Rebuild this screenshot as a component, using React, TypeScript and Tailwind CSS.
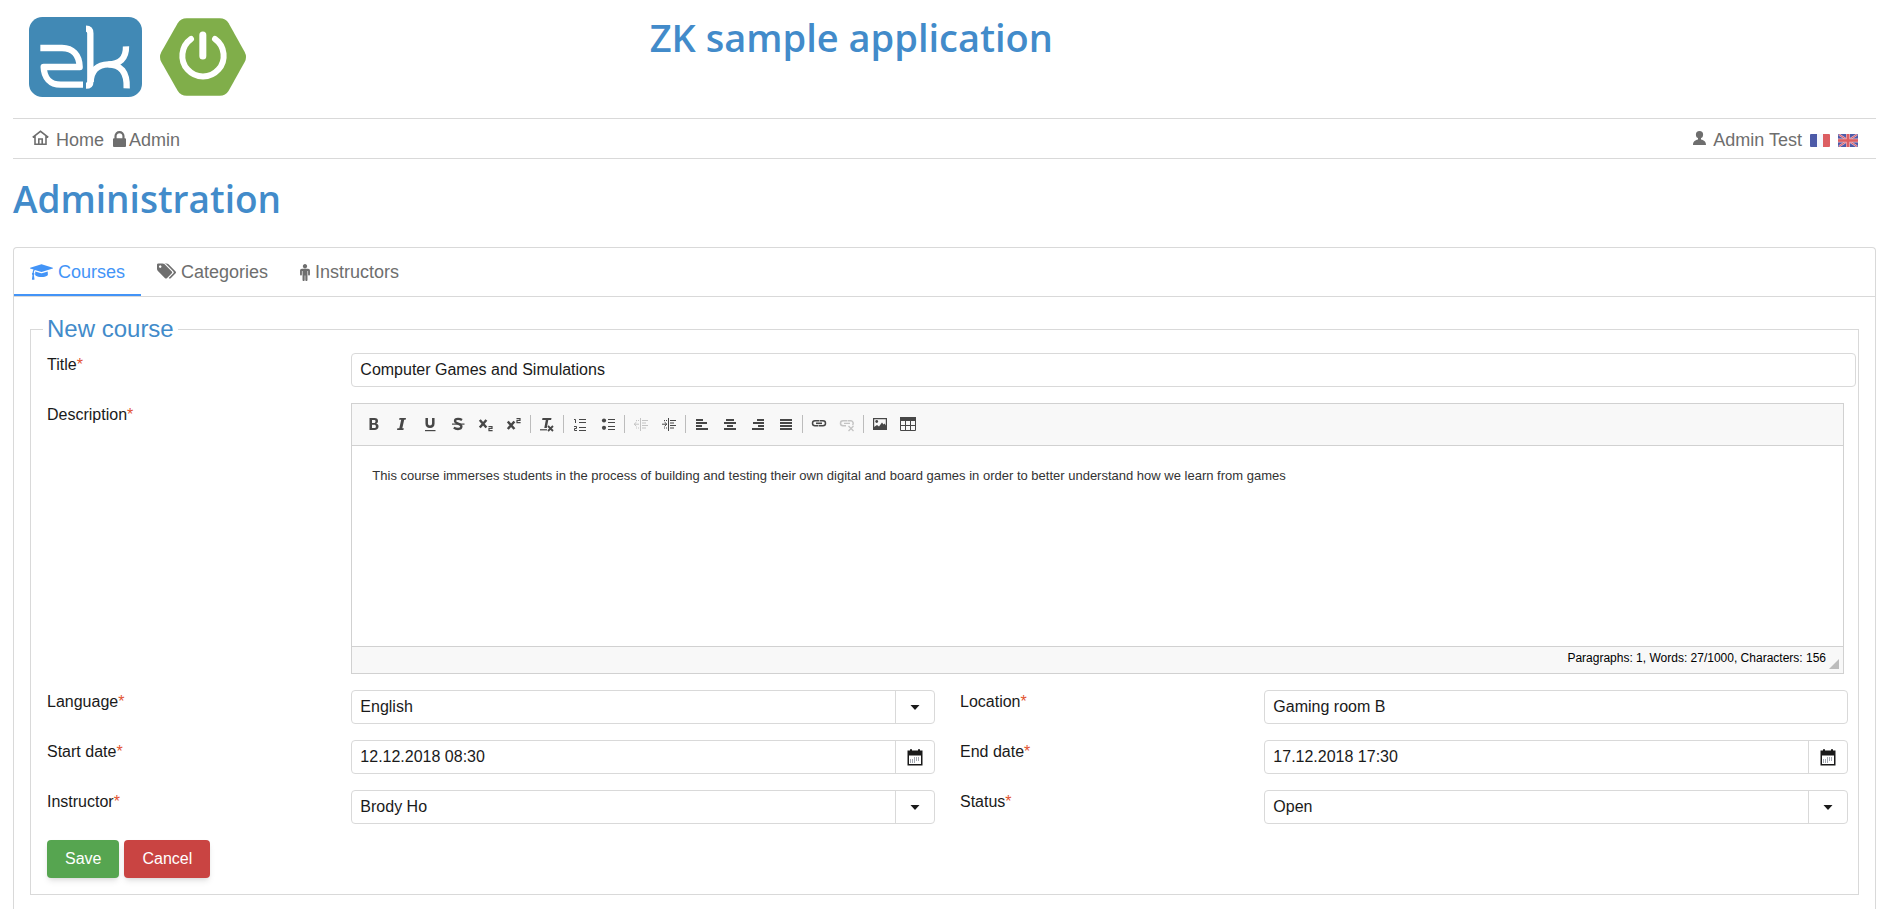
import React, { useId, useState } from "react";

function ZkLogo() {
  return (
    <svg viewBox="87 51 339 240" className="h-20 w-[113px]" aria-label="ZK">
      <rect x="87" y="51" width="339" height="240" rx="40" fill="#4189b5" />
      <g fill="none" stroke="#fff" strokeWidth="19" strokeLinejoin="round">
        <path d="M121 144H186C218 144 238 165 239 201H131C132 233 150 254 182 254H249" />
        <path d="M258 86Q271 86 271 100V245Q271 257 258 257" />
        <path d="M378 139C379 176 358 193 325 193C292 194 273 212 272 246" />
        <path d="M325 193C362 194 382 216 380 265" />
      </g>
    </svg>
  );
}

function SpringBootLogo() {
  return (
    <svg viewBox="480 54 258 234" className="h-[78px] w-[86px]" aria-label="Spring Boot">
      <path
        d="M560 55H659Q677 55 686 70L734 156Q742 171 734 186L686 272Q677 287 659 287H560Q542 287 533 272L484 186Q476 171 484 156L533 70Q542 55 560 55Z"
        fill="#80ae4a"
      />
      <g fill="none" stroke="#fff" strokeLinecap="round">
        <path d="M573 117A62 62 0 1 0 645 117" strokeWidth="18" />
        <path d="M608.500 105V168" strokeWidth="21" />
      </g>
    </svg>
  );
}

function HomeIcon() {
  return (
    <svg viewBox="0 0 17 16" className="mb-1 h-4 w-[17px]" fill="none" stroke="currentColor" strokeWidth="1.600">
      <path d="M.7 7.300 8.500 1.300 16.300 7.300M3 6V14.300H14V6M6.800 14V9H10.200V14" />
    </svg>
  );
}

function LockIcon() {
  return (
    <svg viewBox="0 128 1152 1408" className="mb-0.5 h-4 w-[13px]" fill="currentColor">
      <path d="M320 768h512v-192q0-106-75-181t-181-75-181 75-75 181v192zm832 96v576q0 40-28 68t-68 28h-960q-40 0-68-28t-28-68v-576q0-40 28-68t68-28h32v-192q0-184 132-316t316-132 316 132 132 316v192h32q40 0 68 28t28 68z" />
    </svg>
  );
}

function UserIcon() {
  return (
    <svg viewBox="0 0 13 14" className="mb-1 h-3.5 w-[13px]" fill="currentColor">
      <circle cx="6.500" cy="3.700" r="3.600" />
      <path d="M0 14C0 10.500 1.800 9.300 5 8.500V7H8V8.500C11.200 9.300 13 10.500 13 14Z" />
    </svg>
  );
}

function FrenchFlag() {
  return (
    <svg viewBox="0 0 20 13" className="h-[13px] w-5">
      <rect width="20" height="13" rx="1" fill="#f5f7fd" />
      <path d="M1 0H7V13H1Q0 13 0 12V1Q0 0 1 0Z" fill="#4c5aa8" />
      <path d="M13 0H19Q20 0 20 1V12Q20 13 19 13H13Z" fill="#dc5e62" />
    </svg>
  );
}

function BritishFlag() {
  return (
    <svg viewBox="0 0 20 13" className="h-[13px] w-5">
      <rect width="20" height="13" rx="1" fill="#4c5aa8" />
      <path d="M1 .6 19 12.400M19 .6 1 12.400" stroke="#dfb6cb" strokeWidth="2.200" />
      <path d="M1 .6 19 12.400M19 .6 1 12.400" stroke="#dc5e62" strokeWidth="1" />
      <path d="M10 0V13M0 6.500H20" stroke="#eab4bf" strokeWidth="4" />
      <path d="M10 0V13M0 6.500H20" stroke="#dc5e62" strokeWidth="2.600" />
    </svg>
  );
}

function CoursesIcon() {
  return (
    <svg viewBox="0 128 2304 1536" className="h-4 w-[23px]" fill="currentColor">
      <path d="M1774 836l18 316q4 69-82 128t-235 93.500-323 34.500-323-34.500-235-93.500-82-128l18-316 574 181q22 7 48 7t48-7zM2304 512q0 23-22 31l-1120 352q-4 1-10 1t-10-1l-652-206q-43 34-71 111.500t-34 178.500q63 36 63 109 0 69-58 107l58 433q2 14-8 25-9 11-24 11h-192q-15 0-24-11-10-11-8-25l58-433q-58-38-58-107 0-73 65-111 11-207 98-330l-333-104q-22-8-22-31t22-31l1120-352q4-1 10-1t10 1l1120 352q22 8 22 31z" />
    </svg>
  );
}

function TagsIcon() {
  return (
    <svg viewBox="0 128 1899 1515" className="mb-0.5 h-4 w-[19px]" fill="currentColor">
      <path d="M448 448q0-53-37.500-90.500t-90.500-37.500-90.500 37.500-37.500 90.500 37.500 90.500 90.500 37.500 90.500-37.500 37.500-90.500zm1067 576q0 53-37 90l-491 492q-39 37-91 37-53 0-90-37l-715-716q-38-37-64.500-101t-26.500-117v-416q0-52 38-90t90-38h416q53 0 117 26.500t102 64.500l715 714q37 39 37 91zm384 0q0 53-37 90l-491 492q-39 37-91 37-36 0-59-14t-53-45l470-470q37-37 37-90 0-52-37-91l-715-714q-38-38-102-64.500t-117-26.500h224q53 0 117 26.500t102 64.500l715 714q37 39 37 91z" />
    </svg>
  );
}

function PersonIcon() {
  return (
    <svg viewBox="0 160 1024 1760" className="h-[17px] w-2.5" fill="currentColor">
      <path d="M1024 832v416q0 40-28 68t-68 28-68-28-28-68v-352h-64v912q0 46-33 79t-79 33-79-33-33-79v-464h-64v464q0 46-33 79t-79 33-79-33-33-79v-912h-64v352q0 40-28 68t-68 28-68-28-28-68v-416q0-80 56-136t136-56h640q80 0 136 56t56 136zm-288-448q0 93-65.500 158.500t-158.500 65.500-158.500-65.500-65.500-158.500 65.500-158.500 158.500-65.500 158.500 65.500 65.500 158.500z" />
    </svg>
  );
}

function CalendarIcon() {
  return (
    <svg viewBox="0 0 16 17" className="h-[17px] w-4">
      <path d="M.5 1.500H3V.3H5V1.500H11V.3H13V1.500H15.500V16.500H.5Z" fill="#1a1a1a" />
      <path d="M2 6.500H14V15H2Z" fill="#fff" />
      <path d="M3.500 10V14M5.500 10V14M7.500 8V14M9.500 8V12M11.500 8V12" stroke="#a4a9b2" strokeWidth="1" />
    </svg>
  );
}

function Caret() {
  return (
    <svg viewBox="0 0 10 5" className="h-[5px] w-2.5">
      <path d="M.5 0H9.500L5 5Z" fill="#1a1a1a" />
    </svg>
  );
}

const S = { fill: "none", stroke: "currentColor" } as const;

const toolGroups: { name: string; disabled?: boolean; art: React.ReactNode }[][] = [
  [
    {
      name: "Bold",
      art: <path fillRule="evenodd" d="M3.500 2H8.500C11 2 12 3.200 12 4.900C12 6.200 11.300 7.200 10.200 7.600C11.700 8 12.500 9 12.500 10.500C12.500 12.700 11 14 8.500 14H3.500ZM6 4V6.900H8C9 6.900 9.500 6.300 9.500 5.400S9 4 8 4ZM6 8.800V12H8.200C9.400 12 9.900 11.400 9.900 10.400S9.400 8.800 8.200 8.800Z" />,
    },
    {
      name: "Italic",
      art: <path d="M5.500 2H12L11.600 3.800H10.200L8.300 12.200H9.800L9.400 14H3L3.400 12.200H5.300L7.200 3.800H5.100Z" />,
    },
    {
      name: "Underline",
      art: (
        <>
          <path {...S} strokeWidth="2.500" d="M4.700 2V7.500C4.700 10 6 10.700 8 10.700S11.300 10 11.300 7.500V2" />
          <path d="M3 14H13.500V15.200H3Z" />
        </>
      ),
    },
    {
      name: "Strikethrough",
      art: (
        <>
          <path {...S} strokeWidth="2.300" d="M12 4C10.500 3 9 2.900 8 2.900C6 2.900 5 3.900 5 5C5 8 11.400 7.400 11.400 10.600C11.400 12.300 10 13 8 13C6.300 13 5 12.600 3.800 11.700" />
          <path d="M2 7.500H14.500V8.700H2Z" />
        </>
      ),
    },
    {
      name: "Subscript",
      art: (
        <>
          <path {...S} strokeWidth="2.500" d="M1.800 4 8.400 11.500M8.400 4 1.800 11.500" />
          <path {...S} strokeWidth="1.200" d="M10.500 10.600H14V12.500H11V14.600H14.600" />
        </>
      ),
    },
    {
      name: "Superscript",
      art: (
        <>
          <path {...S} strokeWidth="2.500" d="M1.800 5.500 8.400 13M8.400 5.500 1.800 13" />
          <path {...S} strokeWidth="1.200" d="M10.500 2.600H14V4.500H11V6.600H14.600" />
        </>
      ),
    },
  ],
  [
    {
      name: "Remove format",
      art: (
        <>
          <path d="M3.500 2H12.500L12.100 4H9.300L7.800 12H5.300L6.800 4H3.100Z" />
          <path d="M1 13.200H8V14.400H1Z" />
          <path {...S} strokeWidth="1.800" d="M9 10 14 15M14 10 9 15" />
        </>
      ),
    },
  ],
  [
    {
      name: "Numbered list",
      art: (
        <path {...S} strokeWidth="1" d="M2 3.500H3.500V7M2 10.500H4.500V12.500H2.500V14.500H5M7 3.500H14M7 6.500H14M7 11.500H14M7 14.500H14" />
      ),
    },
    {
      name: "Bulleted list",
      art: (
        <>
          <circle cx="4" cy="4.500" r="2.100" />
          <circle cx="4" cy="11.800" r="2.100" />
          <path {...S} d="M8 3.500H15M8 6.500H15M8 10.500H15M8 13.500H15" />
        </>
      ),
    },
  ],
  [
    {
      name: "Decrease indent",
      disabled: true,
      art: (
        <>
          <path {...S} d="M7.500 2V15M9 4.500H15M9 7H13M9 9.500H15M9 12H13" />
          <path {...S} strokeDasharray="1 1" d="M3 4.500H7M3 12H7" />
          <path {...S} d="M1 8.200H6M3.500 6 1.200 8.200 3.500 10.400" />
        </>
      ),
    },
    {
      name: "Increase indent",
      art: (
        <>
          <path {...S} d="M7.500 2V15M9 4.500H15M9 7H13M9 9.500H15M9 12H13" />
          <path {...S} strokeDasharray="1 1" d="M3 4.500H7M3 12H7" />
          <path {...S} d="M1 8.200H6M3.500 6 5.800 8.200 3.500 10.400" />
        </>
      ),
    },
  ],
  [
    { name: "Align left", art: <path {...S} strokeWidth="2" d="M2 4H9M2 7H13M2 10H8M2 13H14" /> },
    { name: "Center", art: <path {...S} strokeWidth="2" d="M4 4H12M2 7H14M5 10H11M2 13H14" /> },
    { name: "Align right", art: <path {...S} strokeWidth="2" d="M7 4H14M3 7H14M8 10H14M2 13H14" /> },
    { name: "Justify", art: <path {...S} strokeWidth="2" d="M2 4H14M2 7H14M2 10H14M2 13H14" /> },
  ],
  [
    {
      name: "Link",
      art: (
        <>
          <path {...S} strokeWidth="1.500" d="M8.500 4.800H4A2.500 2.500 0 0 0 4 9.800H7M7.500 9.800H12A2.500 2.500 0 0 0 12 4.800H9" />
          <path {...S} strokeWidth="1.600" d="M5 7.300H11" />
        </>
      ),
    },
    {
      name: "Unlink",
      disabled: true,
      art: (
        <>
          <path {...S} strokeWidth="1.500" d="M8.500 4.800H4A2.500 2.500 0 0 0 4 9.800H7M13.500 9A2.500 2.500 0 0 0 12 4.800H9" />
          <path {...S} strokeWidth="1.300" d="M5 7.300H11M9.500 10 14.500 15M14.500 10 9.500 15" />
        </>
      ),
    },
  ],
  [
    {
      name: "Image",
      art: (
        <>
          <path {...S} strokeWidth="1.200" d="M1.600 2.600H14.400V13.400H1.600Z" />
          <circle cx="4.700" cy="5.500" r="1.400" />
          <path d="M2 13V11L5 9L7 10.500L10 6.500L11.500 8.500L12.500 7.500L14 9.500V13Z" />
        </>
      ),
    },
    {
      name: "Table",
      art: (
        <>
          <path d="M0 1H16V5H0Z" />
          <path {...S} d="M.5 4V14.500H15.500V4M0 9.500H16M5.500 4V15M10.500 4V15" />
        </>
      ),
    },
  ],
];

function Toolbar() {
  return (
    <div role="toolbar" className="flex h-[42px] items-center border-b border-[#d1d1d1] bg-[#f8f8f8] px-2 pb-0.5">
      {toolGroups.map((group, index) => (
        <React.Fragment key={index}>
          {index > 0 && <span className="mx-0.5 h-[18px] w-px bg-[#bcbcbc]" />}
          {group.map((tool) => (
            <button
              key={tool.name}
              type="button"
              title={tool.name}
              aria-label={tool.name}
              disabled={tool.disabled}
              className="flex size-7 items-center justify-center text-[#474747] disabled:text-[#c4c4c4]"
            >
              <svg viewBox="0 0 16 16" className="size-4" fill="currentColor">
                {tool.art}
              </svg>
            </button>
          ))}
        </React.Fragment>
      ))}
    </div>
  );
}

function FieldLabel({ htmlFor, children }: { htmlFor: string; children: string }) {
  return (
    <label htmlFor={htmlFor} className="leading-6">
      {children}
      <span className="text-[#e2532f]">*</span>
    </label>
  );
}

const boxClass = "h-[34px] w-full rounded border border-[#d9d9d9] bg-white px-2 text-base outline-none";

function SelectField({ label, value }: { label: string; value: string }) {
  const id = useId();
  return (
    <>
      <FieldLabel htmlFor={id}>{label}</FieldLabel>
      <div className="pr-[25px]">
        <div className="relative">
          <select id={id} defaultValue={value} className={`${boxClass} appearance-none`}>
            <option>{value}</option>
          </select>
          <span className="pointer-events-none absolute inset-y-0 right-0 flex w-10 items-center justify-center border-l border-[#d9d9d9] pr-px">
            <Caret />
          </span>
        </div>
      </div>
    </>
  );
}

function DateField({ label, value }: { label: string; value: string }) {
  const id = useId();
  return (
    <>
      <FieldLabel htmlFor={id}>{label}</FieldLabel>
      <div className="pr-[25px]">
        <div className="flex h-[34px] rounded border border-[#d9d9d9]">
          <input id={id} defaultValue={value} className="min-w-0 flex-1 px-2 outline-none" />
          <button
            type="button"
            aria-label={`Pick ${label.toLowerCase()}`}
            className="flex w-[39px] items-center justify-center border-l border-[#d9d9d9]"
          >
            <CalendarIcon />
          </button>
        </div>
      </div>
    </>
  );
}

const tabs = [
  { name: "Courses", icon: <CoursesIcon /> },
  { name: "Categories", icon: <TagsIcon /> },
  { name: "Instructors", icon: <PersonIcon /> },
];

export default function App() {
  const [active, setActive] = useState("Courses");
  return (
    <div className="min-h-screen bg-white pr-[15px] pl-[13px] font-['Liberation_Sans',Arial,sans-serif] text-base text-[#1a1a1a]">
      <header className="grid h-[118px] grid-cols-[3fr_3fr_4fr] items-start">
        <div className="flex items-center gap-[18px] pt-[17px] pl-4">
          <ZkLogo />
          <SpringBootLogo />
        </div>
        <h1 className="pt-2 text-center font-['Open_Sans','Noto_Sans',sans-serif] text-[38px] leading-[58px] font-semibold whitespace-nowrap text-[#428bca]">
          ZK sample application
        </h1>
      </header>

      <nav className="flex h-[41px] items-center justify-between border-y border-[#d9d9d9] pt-[3px] pr-[18px] pl-[19px] text-lg leading-6 text-[#6e6e6e]">
        <div className="flex items-center gap-[9px]">
          <a href="#home" className="flex items-center gap-[7px]">
            <HomeIcon />
            Home
          </a>
          <a href="#admin" className="flex items-center gap-[3px]">
            <LockIcon />
            Admin
          </a>
        </div>
        <div className="flex items-center gap-2">
          <a href="#profile" className="flex items-center gap-[7px]">
            <UserIcon />
            Admin Test
          </a>
          <button type="button" aria-label="Français">
            <FrenchFlag />
          </button>
          <button type="button" aria-label="English">
            <BritishFlag />
          </button>
        </div>
      </nav>

      <h2 className="pt-2 pb-4 font-['Open_Sans','Noto_Sans',sans-serif] text-[37px] leading-16 font-semibold text-[#428bca]">
        Administration
      </h2>

      <main className="min-h-[662px] rounded-t border border-b-0 border-[#d9d9d9]">
        <div role="tablist" className="flex h-[49px] border-b border-[#d9d9d9]">
          {tabs.map((tab) => (
            <button
              key={tab.name}
              type="button"
              role="tab"
              aria-selected={active === tab.name}
              onClick={() => setActive(tab.name)}
              className="flex items-center gap-[5px] border-b-2 border-transparent px-4 pt-0.5 text-lg text-[#6e6e6e] aria-selected:border-[#4394f7] aria-selected:text-[#4394f7]"
            >
              {tab.icon}
              {tab.name}
            </button>
          ))}
        </div>

        <form className="px-4 pt-4" onSubmit={(event) => event.preventDefault()}>
          <fieldset className="border border-[#d9d9d9] pb-4">
            <legend className="ml-3 px-1 text-2xl leading-8 text-[#428bca]">New course</legend>
            <div className="-mr-[15px] grid grid-cols-[1fr_2fr_1fr_2fr] gap-y-4 pt-2 pl-4">
              <FieldLabel htmlFor="title">Title</FieldLabel>
              <div className="col-span-3 pr-[17px]">
                <input id="title" defaultValue="Computer Games and Simulations" className={boxClass} />
              </div>

              <FieldLabel htmlFor="description">Description</FieldLabel>
              <div className="col-span-3 pr-[29px]">
                <div className="border border-[#d1d1d1]">
                  <Toolbar />
                  <textarea
                    id="description"
                    defaultValue="This course immerses students in the process of building and testing their own digital and board games in order to better understand how we learn from games"
                    className="block h-[200px] w-full resize-none px-5 py-5 text-[13px] leading-5 text-[#333] outline-none"
                  />
                  <div className="flex h-[27px] items-start justify-end border-t border-[#d1d1d1] bg-[#f8f8f8] pr-1 text-xs text-black">
                    <span className="pt-[3px]">Paragraphs: 1, Words: 27/1000, Characters: 156</span>
                    <svg viewBox="0 0 10 10" className="mt-3 ml-[3px] size-2.5">
                      <path d="M10 0V10H0Z" fill="#bcbcbc" />
                    </svg>
                  </div>
                </div>
              </div>

              <SelectField label="Language" value="English" />
              <FieldLabel htmlFor="location">Location</FieldLabel>
              <div className="pr-[25px]">
                <input id="location" defaultValue="Gaming room B" className={boxClass} />
              </div>

              <DateField label="Start date" value="12.12.2018 08:30" />
              <DateField label="End date" value="17.12.2018 17:30" />

              <SelectField label="Instructor" value="Brody Ho" />
              <SelectField label="Status" value="Open" />
            </div>

            <div className="flex gap-[5px] pt-4 pl-4 text-white">
              <button type="submit" className="h-[38px] rounded bg-[#56a550] px-[18px] shadow-md">
                Save
              </button>
              <button type="button" className="h-[38px] rounded bg-[#c94442] px-[18px] shadow-md">
                Cancel
              </button>
            </div>
          </fieldset>
        </form>
      </main>
    </div>
  );
}
